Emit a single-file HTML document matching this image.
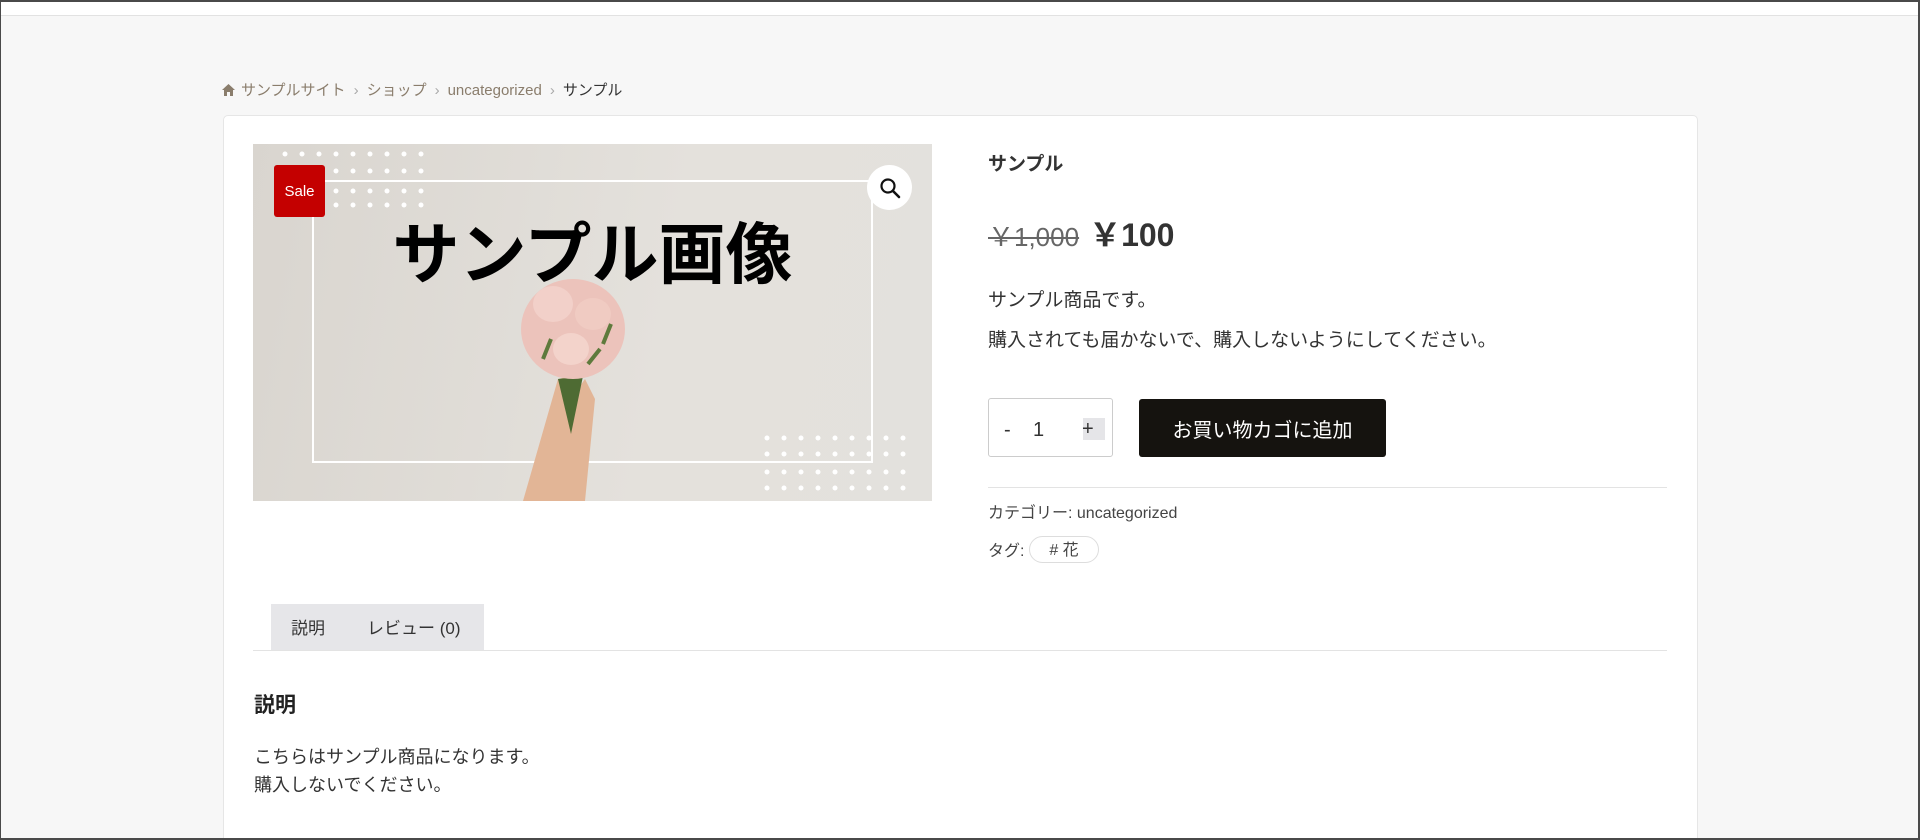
<!DOCTYPE html>
<html><head><meta charset="utf-8"><style>
*{margin:0;padding:0;box-sizing:border-box}
html,body{width:1920px;height:840px;overflow:hidden}
body{background:#f7f7f7;font-family:"Liberation Sans","Noto Sans CJK JP",sans-serif;color:#333;position:relative}
.frame{position:absolute;inset:0;border:2px solid #4a4a4a;border-left-width:1px;pointer-events:none;z-index:10}
.topbar{position:absolute;left:0;top:0;width:1920px;height:16px;background:#fff;border-bottom:1px solid #e2e2e2}
.crumb{position:absolute;left:222px;top:79px;font-size:15px;color:#8a7d6c;white-space:nowrap}
.crumb span{margin-right:6px}
.crumb .sep{color:#aaa;margin:0 8px 0 2px}
.card{position:absolute;left:223px;top:115px;width:1475px;height:740px;background:#fff;border:1px solid #e6e6e6;border-radius:5px}
.img{position:absolute;left:253px;top:144px;width:679px;height:357px;background:linear-gradient(100deg,#d9d5cf,#e4e1dc 60%,#e3e1dd);overflow:hidden}
.abs{position:absolute}
.sale{left:274px;top:165px;width:51px;height:52px;background:#c40000;border-radius:3px;color:#fff;font-size:15px;display:flex;align-items:center;justify-content:center}
.zoom{left:867px;top:165px;width:45px;height:45px;border-radius:50%;background:#fff;display:flex;align-items:center;justify-content:center}
.r{position:absolute;left:988px}
</style></head><body>
<div class="topbar"></div>
<div class="crumb"><span><svg width="13" height="12" viewBox="0 0 13 12" style="vertical-align:-1px"><path d="M6.5 0 L13 6 L11 6 L11 12 L8 12 L8 8 L5 8 L5 12 L2 12 L2 6 L0 6Z" fill="#8a7d6c"/></svg></span><span>サンプルサイト</span><span class="sep">›</span><span>ショップ</span><span class="sep">›</span><span>uncategorized</span><span class="sep">›</span><span style="color:#333">サンプル</span></div>
<div class="card"></div>
<div class="img">
 <svg width="679" height="357" style="position:absolute;left:0;top:0">
  <defs><g id="d" fill="#fff"><circle cx="32" cy="0" r="2.5"/><circle cx="49" cy="0" r="2.5"/><circle cx="66" cy="0" r="2.5"/><circle cx="83" cy="0" r="2.5"/><circle cx="100" cy="0" r="2.5"/><circle cx="117" cy="0" r="2.5"/><circle cx="134" cy="0" r="2.5"/><circle cx="151" cy="0" r="2.5"/><circle cx="168" cy="0" r="2.5"/></g></defs>
  <rect x="60" y="37" width="559" height="281" fill="none" stroke="#fff" stroke-width="2"/>
  <use href="#d" y="10"/><use href="#d" y="27"/><use href="#d" y="47"/><use href="#d" y="61"/>
  <g transform="translate(482,0)"><use href="#d" y="294"/><use href="#d" y="310"/><use href="#d" y="328"/><use href="#d" y="344"/></g>
  <path d="M270 357 L305 235 L318 232 L322 260 L300 357Z M300 357 L318 255 L332 235 L342 255 L332 357Z" fill="#e2b596"/>
  <path d="M305 235 L318 290 L330 232Z" fill="#4e6b33"/>
  <ellipse cx="320" cy="185" rx="52" ry="50" fill="#ecc3bb"/>
  <ellipse cx="300" cy="160" rx="20" ry="18" fill="#f2d0c9"/><ellipse cx="340" cy="170" rx="18" ry="16" fill="#f0cbc2"/><ellipse cx="318" cy="205" rx="18" ry="16" fill="#f3d3cb"/>
  <path d="M290 215 l8 -20 M350 200 l8 -20 M335 220 l12 -15" stroke="#5e7a3c" stroke-width="4"/>
 </svg>
 <div class="abs" style="left:0;width:679px;top:66px;text-align:center;font-size:67px;font-weight:bold;color:#000;line-height:80px;font-family:'Noto Sans CJK JP',sans-serif">サンプル画像</div>
</div>
<div class="abs sale">Sale</div>
<div class="abs zoom"><svg width="24" height="24" viewBox="0 0 24 24"><circle cx="10" cy="10" r="6.5" fill="none" stroke="#111" stroke-width="2.2"/><path d="M15 15 L21 21" stroke="#111" stroke-width="2.6" stroke-linecap="round"/></svg></div>

<div class="r" style="top:149px;font-size:19px;font-weight:bold;color:#333">サンプル</div>
<div class="r" style="top:210px;white-space:nowrap"><span style="font-size:26px;color:#666;text-decoration:line-through">￥1,000</span><span style="font-size:32px;font-weight:bold;color:#333;margin-left:10px">￥100</span></div>
<div class="r" style="top:281px;font-size:19px;line-height:40px;color:#333">サンプル商品です。<br>購入されても届かないで、購入しないようにしてください。</div>
<div class="r" style="top:398px;width:125px;height:59px;border:1px solid #ccc;border-radius:3px;font-size:20px">
 <span class="abs" style="left:15px;top:20px">-</span><span class="abs" style="left:44px;top:20px">1</span>
 <span class="abs" style="left:94px;top:19px;width:22px;height:22px;background:#e5e5e8"></span><span class="abs" style="left:93px;top:19px">+</span>
</div>
<div class="abs" style="left:1139px;top:399px;width:247px;height:58px;background:#15130f;border-radius:3px;color:#fff;font-size:20px;display:flex;align-items:center;justify-content:center">お買い物カゴに追加</div>
<div class="abs" style="left:988px;top:487px;width:679px;height:1px;background:#e3e3e3"></div>
<div class="r" style="top:499px;font-size:16px;color:#444">カテゴリー: uncategorized</div>
<div class="r" style="top:537px;font-size:16px;color:#444">タグ:</div>
<div class="abs" style="left:1029px;top:536px;width:70px;height:27px;border:1px solid #ddd;border-radius:14px;font-size:16px;color:#444;text-align:center;line-height:27px"># 花</div>

<div class="abs" style="left:271px;top:604px;width:213px;height:46px;background:#e6e6e9"></div>
<div class="abs" style="left:291px;top:614px;font-size:17px;color:#333">説明</div>
<div class="abs" style="left:367px;top:614px;font-size:17px;color:#333">レビュー (0)</div>
<div class="abs" style="left:253px;top:650px;width:1414px;height:1px;background:#e3e3e3"></div>
<div class="abs" style="left:254px;top:689px;font-size:21px;font-weight:bold;color:#222">説明</div>
<div class="abs" style="left:254px;top:743px;font-size:18px;line-height:28px;color:#333">こちらはサンプル商品になります。<br>購入しないでください。</div>
<div class="frame"></div>
</body></html>
